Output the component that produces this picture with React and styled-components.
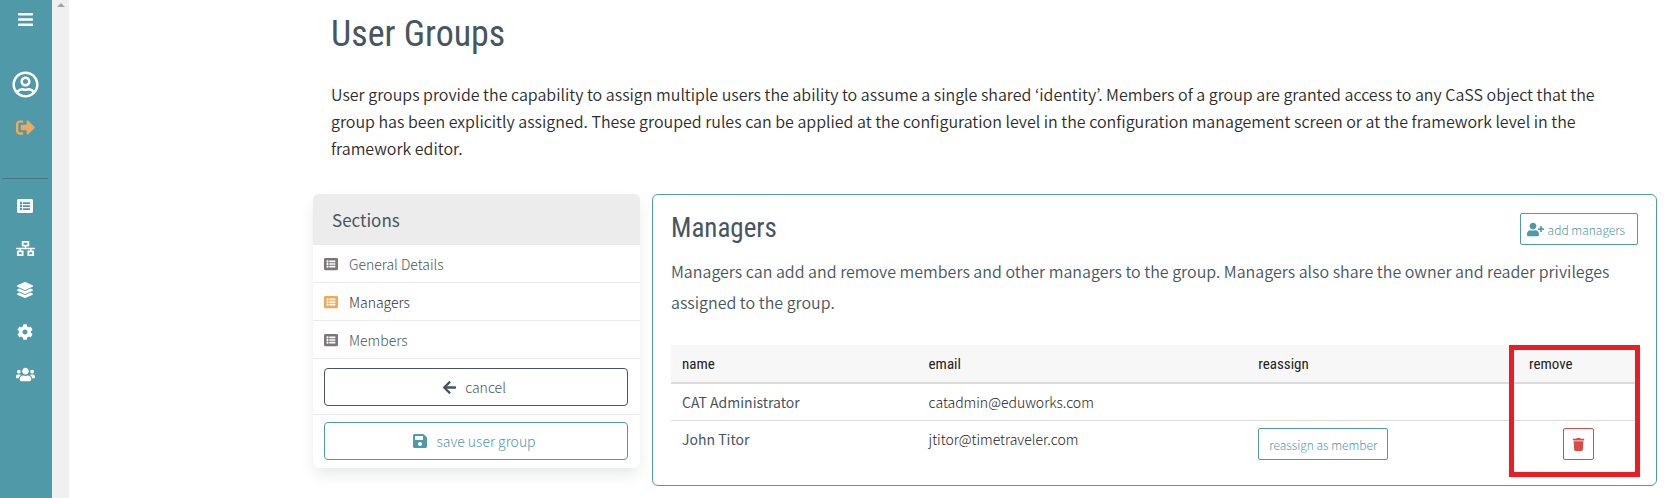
import React from "react";
import styled, { createGlobalStyle, css } from "styled-components";
import {
  FaBars, FaRegUserCircle, FaSignOutAlt, FaListAlt, FaNetworkWired, FaLayerGroup,
  FaCog, FaUsers, FaArrowLeft, FaSave, FaUserPlus, FaTrash,
} from "react-icons/fa";

const teal = "#5099a8";
const slate = "#47565e";
const orange = "#f0a95c";
const red = "#dc4a44";
const body = '"Source Sans Pro", "Noto Sans CJK KR", "Open Sans", sans-serif';
const condensed = '"Roboto Condensed", "Liberation Sans Narrow", "Noto Sans CJK KR", sans-serif';

const GlobalStyle = createGlobalStyle`
  *, *::before, *::after { box-sizing: border-box; }
  body { margin: 0; background: #fff; color: #222; font-family: ${body}; font-weight: 300; }
  h1, h2, h3, p, ul { margin: 0; padding: 0; }
  ul { list-style: none; }
  button { font-family: inherit; font-weight: inherit; cursor: pointer; }
  svg { display: block; flex: none; }
`;

const Page = styled.div`
  display: flex;
  min-height: 100vh;
`;

const Rail = styled.nav`
  flex: none;
  width: 52px;
  padding: 9px 4px 0 2px;
  background: ${teal};
`;

const RailGroup = styled.ul`
  display: flex;
  flex-direction: column;
  align-items: center;
  gap: ${(p) => p.$gap}px;
  ${(p) => p.$divided && css`
    margin-top: 41px;
    padding-top: 17px;
    border-top: 1px solid #4c7580;
  `}
`;

const RailSpacer = styled.li`
  height: ${(p) => p.$height}px;
`;

const RailLink = styled.a`
  display: flex;
  align-items: center;
  justify-content: center;
  width: 44px;
  height: ${(p) => p.$height || 20}px;
  color: ${(p) => p.$color || "#fff"};
`;

const ScrollTrack = styled.div`
  flex: none;
  width: 17px;
  padding-top: 3px;
  background: #f0f0f0;
`;

const ScrollArrow = styled.svg`
  margin: 0 auto;
  fill: #a3a3a3;
`;

const Main = styled.main`
  flex: 1;
  min-width: 0;
  padding: 10px 16px 12px 244px;
`;

const Intro = styled.header`
  padding: 0 24px 0 18px;
`;

const Title = styled.h1`
  font: 400 36px/48px ${condensed};
  color: ${slate};
`;

const Lead = styled.p`
  margin-top: 23px;
  color: #2c2c2c;
  font-size: 16px;
  font-weight: 350;
  line-height: 27px;
`;

const Columns = styled.div`
  display: flex;
  align-items: flex-start;
  gap: 12px;
  margin-top: 32px;
`;

const Sections = styled.aside`
  flex: 0 0 327px;
  border-radius: 6px;
  overflow: hidden;
  box-shadow: 0 8px 16px -2px rgba(10, 40, 40, 0.1), 0 0 1px rgba(10, 10, 10, 0.04);
`;

const SectionsTitle = styled.h3`
  padding: 0 19px;
  background: #ececec;
  color: ${slate};
  font-size: 17px;
  font-weight: 400;
  line-height: 51px;
`;

const SectionItem = styled.li`
  border-bottom: 1px solid #ebebeb;
`;

const SectionLink = styled.a`
  display: flex;
  align-items: center;
  gap: 11px;
  height: 37px;
  padding: 0 11px;
  color: ${(p) => (p.$active ? "#333" : slate)};
  font-size: 14px;
  text-decoration: none;

  svg { color: ${(p) => (p.$active ? orange : "#7c7878")}; }
`;

const SectionAction = styled.div`
  padding: 9px 12px 8px 11px;
  & + & { border-top: 1px solid #ebebeb; padding-top: 7px; }
`;

const BlockButton = styled.button`
  display: flex;
  align-items: center;
  justify-content: center;
  gap: 8px;
  width: 100%;
  height: 38px;
  padding: 0 8px 0 4px;
  background: #fff;
  border: 1px solid ${(p) => p.$tone};
  border-radius: 4px;
  color: ${(p) => p.$tone};
  font-size: 14px;
`;

const Panel = styled.section`
  flex: 1;
  min-width: 0;
  padding: 18px;
  border: 1px solid ${teal};
  border-radius: 6px;
`;

const PanelHead = styled.div`
  display: flex;
  align-items: flex-start;
  justify-content: space-between;
`;

const PanelTitle = styled.h2`
  font: 400 27px/30px ${condensed};
  color: ${slate};
`;

const PanelText = styled.p`
  margin-top: 11px;
  color: ${slate};
  font-size: 16px;
  font-weight: 350;
  line-height: 31px;
`;

const SmallButton = styled.button`
  display: inline-flex;
  align-items: center;
  justify-content: center;
  gap: 4px;
  height: 32px;
  padding: 0 ${(p) => p.$padRight || 10}px 0 ${(p) => p.$padLeft || 10}px;
  background: #fff;
  border: 1px solid ${(p) => p.$tone || teal};
  border-radius: 2px;
  color: ${(p) => p.$tone || teal};
  font-size: 12px;
  vertical-align: top;
`;

const TableArea = styled.div`
  position: relative;
  margin-top: 27px;
`;

const Table = styled.table`
  width: 100%;
  border-collapse: collapse;
  table-layout: fixed;
  font-size: 14px;
  line-height: 22px;
`;

const HeadCell = styled.th`
  width: ${(p) => p.$width};
  height: 38px;
  padding: 0 11px;
  background: #f7f7f7;
  border-bottom: 2px solid #dbdbdb;
  color: #222;
  font: 400 15px/22px ${condensed};
  text-align: left;
`;

const Cell = styled.td`
  height: ${(p) => (p.$last ? 46 : 37)}px;
  padding: 7px 11px;
  border-bottom: ${(p) => (p.$last ? "0" : "1px solid #dbdbdb")};
  color: ${(p) => (p.$name ? slate : "#222")};
  font-weight: ${(p) => (p.$name ? 400 : 300)};
  text-align: ${(p) => (p.$center ? "center" : "left")};
  vertical-align: top;
`;

const Highlight = styled.div`
  position: absolute;
  top: 0;
  right: -2px;
  bottom: -10px;
  width: 131px;
  border: 5px solid #ed1c24;
  pointer-events: none;
`;

const railTop = [
  { label: "Menu", Icon: FaBars, size: 17, height: 20 },
  { label: "Account", Icon: FaRegUserCircle, size: 27, height: 28 },
  { label: "Sign out", Icon: FaSignOutAlt, size: 19, height: 20, color: orange },
];

const railMain = [
  { label: "Frameworks", Icon: FaListAlt },
  { label: "Structure", Icon: FaNetworkWired, size: 19 },
  { label: "Layers", Icon: FaLayerGroup },
  { label: "Configuration", Icon: FaCog },
  { label: "User groups", Icon: FaUsers, size: 19 },
];

const sections = ["General Details", "Managers", "Members"];

const people = [
  { name: "CAT Administrator", email: "catadmin@eduworks.com" },
  { name: "John Titor", email: "jtitor@timetraveler.com", editable: true },
];

export default function App() {
  return (
    <Page>
      <GlobalStyle />
      <Rail aria-label="Main">
        <RailGroup $gap={0}>
          {railTop.map(({ label, Icon, size, height, color }, i) => (
            <React.Fragment key={label}>
              {i > 0 && <RailSpacer $height={i === 1 ? 41 : 19} aria-hidden="true" />}
              <li>
                <RailLink href="#" aria-label={label} $height={height} $color={color}>
                  <Icon size={size} />
                </RailLink>
              </li>
            </React.Fragment>
          ))}
        </RailGroup>
        <RailGroup $gap={22} $divided>
          {railMain.map(({ label, Icon, size = 16 }) => (
            <li key={label}>
              <RailLink href="#" aria-label={label}><Icon size={size} /></RailLink>
            </li>
          ))}
        </RailGroup>
      </Rail>
      <ScrollTrack aria-hidden="true">
        <ScrollArrow width="8" height="4" viewBox="0 0 8 4"><path d="M4 0L8 4H0z" /></ScrollArrow>
      </ScrollTrack>
      <Main>
        <Intro>
          <Title>User Groups</Title>
          <Lead>
            User groups provide the capability to assign multiple users the ability to assume a
            single shared ‘identity’. Members of a group are granted access to any CaSS object that
            the group has been explicitly assigned. These grouped rules can be applied at the
            configuration level in the configuration management screen or at the framework level in
            the framework editor.
          </Lead>
        </Intro>
        <Columns>
          <Sections>
            <SectionsTitle>Sections</SectionsTitle>
            <ul>
              {sections.map((name) => (
                <SectionItem key={name}>
                  <SectionLink href="#" $active={name === "Managers"}>
                    <FaListAlt size={14} />
                    {name}
                  </SectionLink>
                </SectionItem>
              ))}
            </ul>
            <SectionAction>
              <BlockButton type="button" $tone={slate}><FaArrowLeft size={15} />cancel</BlockButton>
            </SectionAction>
            <SectionAction>
              <BlockButton type="button" $tone={teal}><FaSave size={16} />save user group</BlockButton>
            </SectionAction>
          </Sections>
          <Panel>
            <PanelHead>
              <PanelTitle>Managers</PanelTitle>
              <SmallButton type="button" $padLeft={6} $padRight={12}>
                <FaUserPlus size={17} />add managers
              </SmallButton>
            </PanelHead>
            <PanelText>
              Managers can add and remove members and other managers to the group. Managers also
              share the owner and reader privileges assigned to the group.
            </PanelText>
            <TableArea>
              <Table>
                <thead>
                  <tr>
                    <HeadCell scope="col" $width="25.5%">name</HeadCell>
                    <HeadCell scope="col" $width="34.1%">email</HeadCell>
                    <HeadCell scope="col" $width="28%">reassign</HeadCell>
                    <HeadCell scope="col">remove</HeadCell>
                  </tr>
                </thead>
                <tbody>
                  {people.map(({ name, email, editable }) => (
                    <tr key={name}>
                      <Cell $name $last={editable}>{name}</Cell>
                      <Cell $last={editable}>{email}</Cell>
                      <Cell $last={editable}>
                        {editable && <SmallButton type="button">reassign as member</SmallButton>}
                      </Cell>
                      <Cell $last={editable} $center>
                        {editable && (
                          <SmallButton type="button" aria-label={`Remove ${name}`} $tone={red} $padLeft={8} $padRight={8}>
                            <FaTrash size={13} />
                          </SmallButton>
                        )}
                      </Cell>
                    </tr>
                  ))}
                </tbody>
              </Table>
              <Highlight />
            </TableArea>
          </Panel>
        </Columns>
      </Main>
    </Page>
  );
}
